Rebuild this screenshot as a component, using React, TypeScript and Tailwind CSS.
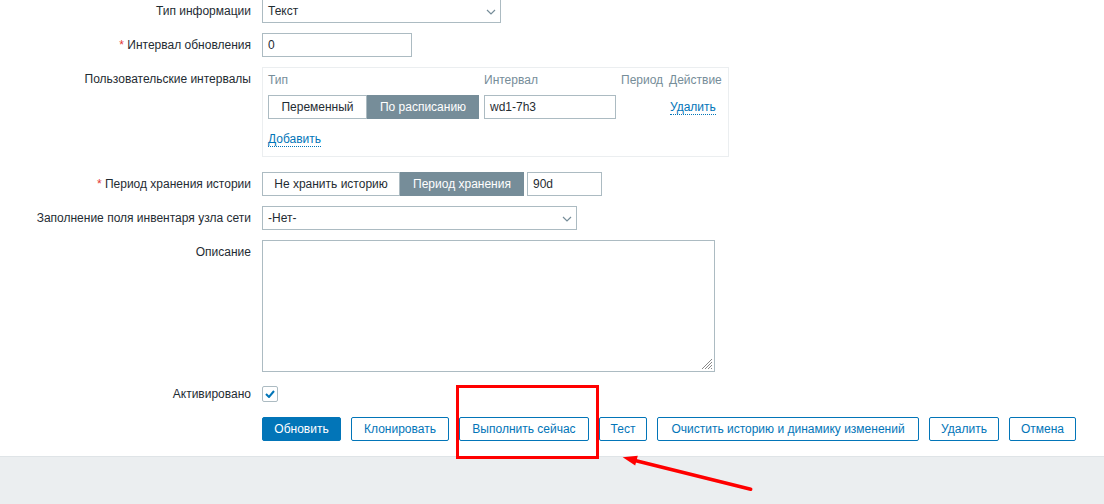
import React from "react";

// Zabbix item edit form (lower part) with a red annotation around "Выполнить сейчас".

const TEXT = "text-[#1f2c33]";

function Label({ children, required }: { children: React.ReactNode; required?: boolean }) {
  return (
    <div className={`w-[251px] shrink-0 pt-[5px] text-right leading-[14px] ${TEXT}`}>
      {required && <span className="text-[#e33734]">* </span>}
      {children}
    </div>
  );
}

function Row({ label, required, className = "", children }: { label: string; required?: boolean; className?: string; children: React.ReactNode }) {
  return (
    <div className={`flex ${className}`}>
      <Label required={required}>{label}</Label>
      <div className="ml-[11px]">{children}</div>
    </div>
  );
}

function Chevron() {
  return (
    <svg width="10" height="6" viewBox="0 0 10 6" className="absolute right-[4px] top-[9px]">
      <polyline points="1,1 5,5 9,1" fill="none" stroke="#768d99" strokeWidth="1.2" />
    </svg>
  );
}

function Select({ value, width }: { value: string; width: string }) {
  return (
    <div className={`relative h-[24px] ${width} border border-[#acbbc2] bg-white pl-[5px] leading-[22px] ${TEXT}`}>
      {value}
      <Chevron />
    </div>
  );
}

function Input({ value, width }: { value: string; width: string }) {
  return (
    <div className={`h-[24px] ${width} border border-[#acbbc2] bg-white pl-[5px] leading-[22px] ${TEXT}`}>{value}</div>
  );
}

function Segmented({ items, widths, active }: { items: string[]; widths: string[]; active: number }) {
  return (
    <div className="flex h-[24px]">
      {items.map((it, i) =>
        i === active ? (
          <div key={it} className={`${widths[i]} border border-[#768d99] bg-[#768d99] text-center leading-[22px] text-white`}>
            {it}
          </div>
        ) : (
          <div key={it} className={`${widths[i]} border border-[#acbbc2] bg-white text-center leading-[22px] ${TEXT}`}>
            {it}
          </div>
        )
      )}
    </div>
  );
}

function Link({ children }: { children: React.ReactNode }) {
  return (
    <span className="border-b border-dotted border-[#0275b8] leading-[14px] text-[#0275b8]">{children}</span>
  );
}

function Button({ children, primary, width }: { children: React.ReactNode; primary?: boolean; width: string }) {
  return primary ? (
    <div className={`h-[24px] ${width} rounded-[2px] border border-[#0275b8] bg-[#0275b8] text-center leading-[22px] text-white`}>
      {children}
    </div>
  ) : (
    <div className={`h-[24px] ${width} rounded-[2px] border border-[#0275b8] bg-white text-center leading-[22px] text-[#0275b8]`}>
      {children}
    </div>
  );
}

export default function App() {
  return (
    <div
      className="relative h-[504px] w-[1104px] overflow-hidden bg-white text-[12px]"
      style={{ fontFamily: '"Liberation Sans", Arial, sans-serif' }}
    >
      <div className="flex flex-col">
        <Row label="Тип информации" className="mt-[-1px] mb-[10px]">
          <Select value="Текст" width="w-[239px]" />
        </Row>

        <Row label="Интервал обновления" required className="mb-[10px]">
          <Input value="0" width="w-[150px]" />
        </Row>

        <Row label="Пользовательские интервалы" className="mb-[15px]">
          <div className="h-[90px] w-[467px] border border-[#ebeef0] px-[5px] pt-[5px]">
            <div className="grid h-[22px] grid-cols-[216px_137px_48px_auto] leading-[14px] text-[#768d99]">
              <div>Тип</div>
              <div>Интервал</div>
              <div>Период</div>
              <div>Действие</div>
            </div>
            <div className="grid h-[24px] grid-cols-[216px_137px_48px_auto] items-center">
              <Segmented items={["Переменный", "По расписанию"]} widths={["w-[99px]", "w-[112px]"]} active={1} />
              <Input value="wd1-7h3" width="w-[132px]" />
              <div />
              <div className="pl-[1px]">
                <Link>Удалить</Link>
              </div>
            </div>
            <div className="mt-[11px]">
              <Link>Добавить</Link>
            </div>
          </div>
        </Row>

        <Row label="Период хранения истории" required className="mb-[10px]">
          <div className="flex gap-[3px]">
            <Segmented items={["Не хранить историю", "Период хранения"]} widths={["w-[138px]", "w-[124px]"]} active={1} />
            <Input value="90d" width="w-[75px]" />
          </div>
        </Row>

        <Row label="Заполнение поля инвентаря узла сети" className="mb-[10px]">
          <Select value="-Нет-" width="w-[315px]" />
        </Row>

        <Row label="Описание" className="mb-[10px]">
          <div className="relative h-[132px] w-[453px] border border-[#acbbc2] bg-white">
            <svg width="12" height="12" viewBox="0 0 12 12" className="absolute bottom-[1px] right-[1px]">
              <g stroke="#8a8a8a" strokeWidth="1">
                <line x1="11" y1="1" x2="1" y2="11" />
                <line x1="11" y1="4" x2="4" y2="11" />
                <line x1="11" y1="7" x2="7" y2="11" />
                <line x1="11" y1="10" x2="10" y2="11" />
              </g>
            </svg>
          </div>
        </Row>

        <Row label="Активировано" className="mb-[11px]">
          <div className="flex h-[24px] items-center">
            <div className="flex h-[16px] w-[16px] items-center justify-center rounded-[2px] border border-[#acbbc2] bg-white">
              <svg width="10" height="8" viewBox="0 0 10 8">
                <polyline points="1,4 4,7 9,1" fill="none" stroke="#0275b8" strokeWidth="2" />
              </svg>
            </div>
          </div>
        </Row>

        <div className="flex gap-[10px] pb-[15px] pl-[262px]">
          <Button primary width="w-[79px]">Обновить</Button>
          <Button width="w-[98px]">Клонировать</Button>
          <Button width="w-[130px]">Выполнить сейчас</Button>
          <Button width="w-[48px]">Тест</Button>
          <Button width="w-[262px]">Очистить историю и динамику изменений</Button>
          <Button width="w-[70px]">Удалить</Button>
          <Button width="w-[67px]">Отмена</Button>
        </div>

        <div className="h-[60px] border-t border-[#dfe4e7] bg-[#ebeef0]" />
      </div>

      {/* annotation overlay */}
      <div className="pointer-events-none absolute left-[456px] top-[385px] h-[74px] w-[143px] border-[3px] border-[#ff0000]" />
      <svg width="1104" height="504" className="pointer-events-none absolute left-0 top-0">
        <line x1="750.7" y1="489.3" x2="634" y2="460.2" stroke="#ff0000" strokeWidth="3.5" strokeLinecap="round" />
        <polygon points="622.7,457.3 637.8,455.8 635.2,465.6" fill="#ff0000" />
      </svg>
    </div>
  );
}
